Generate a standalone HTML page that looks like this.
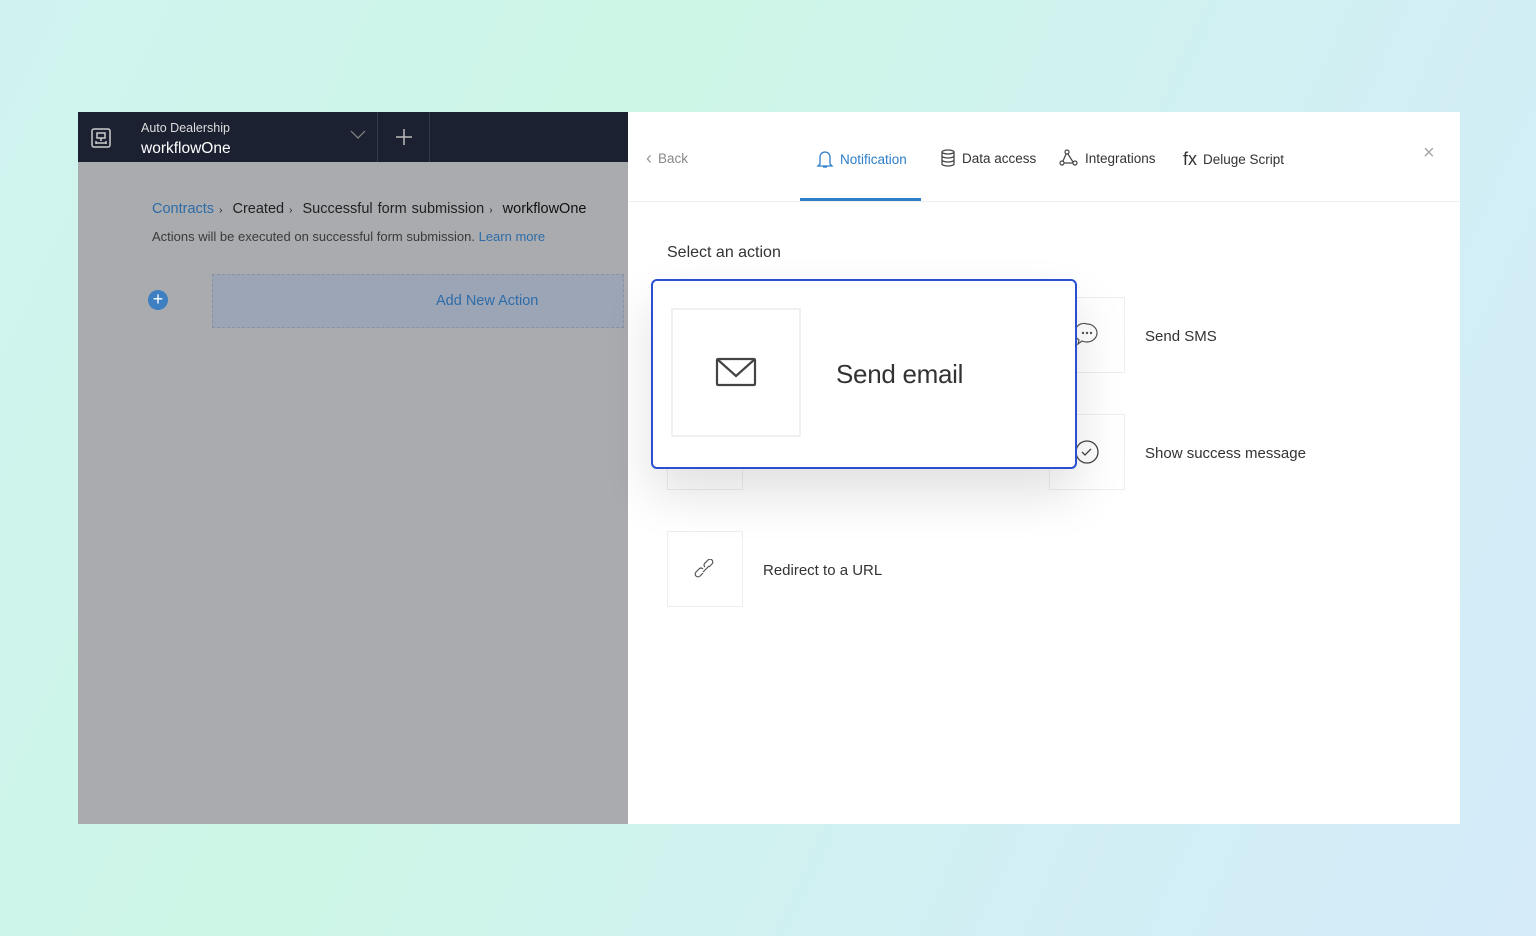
<!DOCTYPE html>
<html><head><meta charset="utf-8"><style>
*{margin:0;padding:0;box-sizing:border-box}
body{width:1536px;height:936px;overflow:hidden;background:linear-gradient(115deg,#d0f3f0 0%,#cdf6e6 35%,#d0f0f2 65%,#d5ebfa 100%);font-family:"Liberation Sans",sans-serif;position:relative}
.left{position:absolute;left:78px;top:112px;width:550px;height:712px;background:#a9abae}
.top{position:absolute;left:0;top:0;width:550px;height:50px;background:#1b2130;color:#fff}
.right{position:absolute;left:628px;top:112px;width:832px;height:712px;background:#fff}
.abs{position:absolute}
.tab{position:absolute;top:37px;font-size:13.5px;color:#333;display:flex;align-items:center;gap:6px;white-space:nowrap}
.box{position:absolute;width:76px;height:76px;border:1px solid #eee;background:#fff}
.lbl{position:absolute;font-size:15px;color:#333}
</style></head><body>
<div class="left">
  <div class="top">
    <svg class="abs" style="left:12px;top:15px" width="22" height="22" viewBox="0 0 22 22" fill="none" stroke="#ccc" stroke-width="1.5"><rect x="2" y="2" width="18" height="18" rx="2"/><rect x="7" y="6" width="8" height="5"/><path d="M11 11v3M6 16h10M6 14v3M16 14v3"/></svg>
    <div class="abs" style="left:63px;top:9px;font-size:12.5px;color:#ddd">Auto Dealership</div>
    <div class="abs" style="left:63px;top:28px;font-size:15.5px;color:#fff">workflowOne</div>
    <svg class="abs" style="left:272px;top:18px" width="16" height="10" viewBox="0 0 16 10" fill="none" stroke="#888" stroke-width="1.2"><path d="M1 1l7 7 7-7"/></svg>
    <div class="abs" style="left:299px;top:0;width:1px;height:50px;background:#333a48"></div>
    <svg class="abs" style="left:317px;top:16px" width="18" height="18" viewBox="0 0 18 18" stroke="#bbb" stroke-width="1.5"><path d="M9 1v16M1 9h16"/></svg>
    <div class="abs" style="left:351px;top:0;width:1px;height:50px;background:#333a48"></div>
  </div>
  <div class="abs" style="left:74px;top:89px;font-size:14.5px;color:#222;white-space:nowrap;word-spacing:1px"><span style="color:#2e6ca8">Contracts</span> <span style="font-size:10px">›</span>&nbsp; Created <span style="font-size:10px">›</span>&nbsp; Successful form submission <span style="font-size:10px">›</span>&nbsp; <span style="color:#111">workflowOne</span></div>
  <div class="abs" style="left:74px;top:117px;font-size:13px;color:#3a3a3a;white-space:nowrap">Actions will be executed on successful form submission. <span style="color:#2e6ca8">Learn more</span></div>
  <div class="abs" style="left:70px;top:178px;width:20px;height:20px;border-radius:50%;background:#3d7fc0;color:#fff;font-size:18px;line-height:19px;text-align:center">+</div>
  <div class="abs" style="left:134px;top:162px;width:412px;height:54px;background:#9ca5b6;border:1px dashed #8a93a3;line-height:52px;font-size:14.5px;color:#2e6ca8;padding-left:223px;white-space:nowrap">Add New Action</div>
</div>
<div class="right">
  <div class="tab" style="left:18px;top:36px;color:#888"><span style="font-size:18px;color:#999">‹</span> Back</div>
  <div class="tab" style="left:188px;color:#2e7dc8"><svg width="18" height="20" viewBox="0 0 18 20" fill="none" stroke="#2e7dc8" stroke-width="1.3"><path d="M4 15V8a5 5 0 0110 0v7l2 2H2zM7 18h4"/></svg>Notification</div>
  <div class="tab" style="left:312px"><svg width="16" height="18" viewBox="0 0 16 18" fill="none" stroke="#444" stroke-width="1.3"><ellipse cx="8" cy="3" rx="6" ry="2"/><path d="M2 3v12c0 1 3 2 6 2s6-1 6-2V3M2 7c0 1 3 2 6 2s6-1 6-2M2 11c0 1 3 2 6 2s6-1 6-2"/></svg>Data access</div>
  <div class="tab" style="left:431px"><svg width="20" height="18" viewBox="0 0 20 18" fill="none" stroke="#444" stroke-width="1.2"><circle cx="8" cy="3" r="2"/><circle cx="3" cy="14" r="2"/><circle cx="16" cy="14" r="2"/><path d="M7 5l-3 7M9 5l5 8M5 14h9"/></svg>Integrations</div>
  <div class="tab" style="left:555px"><span style="font-size:18px;color:#333">fx</span> Deluge Script</div>
  <div class="abs" style="left:795px;top:30px;font-size:20px;color:#aaa">×</div>
  <div class="abs" style="left:172px;top:86px;width:121px;height:3px;background:#2e7dc8"></div>
  <div class="abs" style="left:0;top:89px;width:832px;height:1px;background:#f0f0f0"></div>
  <div class="abs" style="left:39px;top:132px;font-size:16px;color:#333">Select an action</div>
  <div class="box" style="left:421px;top:185px"></div>
  <div class="lbl" style="left:517px;top:216px">Send SMS</div>
  <div class="box" style="left:421px;top:302px"></div>
  <div class="box" style="left:39px;top:302px"></div>
  <div class="lbl" style="left:517px;top:333px">Show success message</div>
  <div class="box" style="left:39px;top:419px"><svg class="abs" style="left:26px;top:27px" width="24" height="22" viewBox="0 0 24 22" fill="none" stroke="#555" stroke-width="1.2"><path d="M9 14l-3 3a2.5 2.5 0 01-4-4l3-3a2.5 2.5 0 014 0M15 8l3-3a2.5 2.5 0 00-4-4l-3 3a2.5 2.5 0 000 4M9 13l6-6"/></svg></div>
  <div class="lbl" style="left:135px;top:450px">Redirect to a URL</div>
  <svg class="abs" style="left:446px;top:210px" width="26" height="26" viewBox="0 0 26 26" fill="none" stroke="#555" stroke-width="1.2"><path d="M13 2a10 9 0 110 18c-2 0-3 0-5-1l-4 3 1-4a9 9 0 018-16z"/><circle cx="9" cy="11" r=".6" fill="#555"/><circle cx="13" cy="11" r=".6" fill="#555"/><circle cx="17" cy="11" r=".6" fill="#555"/></svg>
  <svg class="abs" style="left:446px;top:327px" width="26" height="26" viewBox="0 0 26 26" fill="none" stroke="#444" stroke-width="1.3"><circle cx="13" cy="13" r="11"/><path d="M8 13l3 3 6-6"/></svg>
  <div class="abs" style="left:23px;top:167px;width:426px;height:190px;background:#fff;border:2px solid #2a4fd0;border-radius:6px;box-shadow:0 25px 50px rgba(0,0,0,.12)">
    <div class="abs" style="left:18px;top:27px;width:130px;height:129px;border:2px solid #f0f0f0"></div>
    <svg class="abs" style="left:62px;top:76px" width="42" height="30" viewBox="0 0 42 30" fill="none" stroke="#444" stroke-width="2.2"><rect x="2" y="2" width="38" height="26" rx="1"/><path d="M2 2l19 17L40 2"/></svg>
    <div class="abs" style="left:183px;top:78px;font-size:26px;color:#333;letter-spacing:-0.3px">Send email</div>
  </div>
</div>
</body></html>
